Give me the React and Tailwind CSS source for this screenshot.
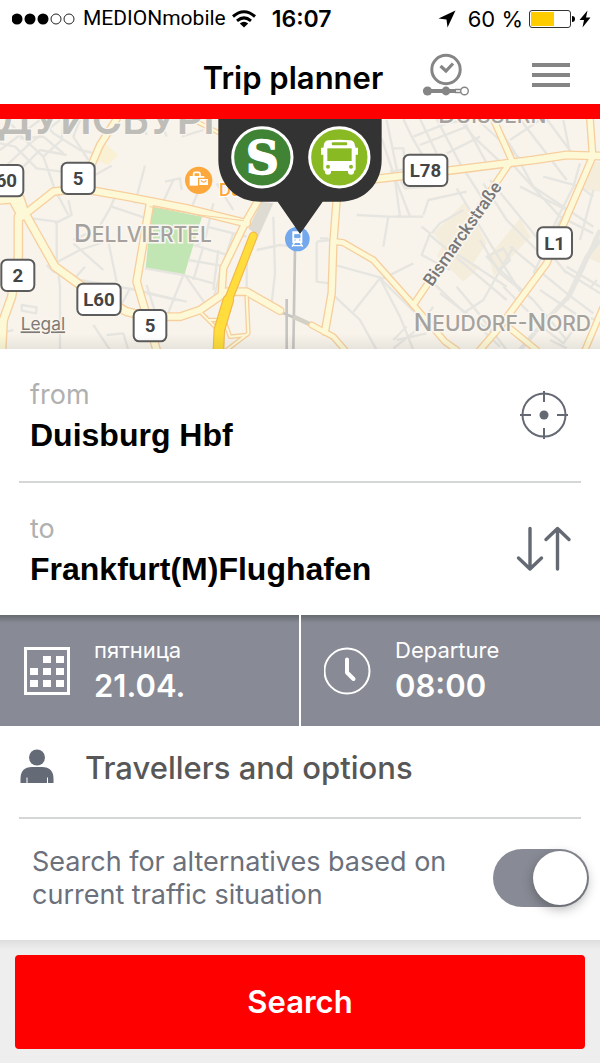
import React, { useState } from 'react';

const minorRoads = [
  'M0 150 L60 105 L120 60', 'M0 215 L90 130 L180 60', 'M20 57 L70 115 L130 170 L165 270 L205 345', 'M60 115 L130 110 L190 160',
  'M0 130 L45 140 L110 205 L185 215', 'M125 60 L160 100 L240 150 L285 160', 'M190 60 L185 120 L130 170', 'M70 200 L120 150 L200 165',
  'M240 60 L220 110 L265 180', 'M285 225 L335 197', 'M435 197 L405 310', 'M345 290 L330 325 L295 385 L220 420', 'M335 320 L440 355',
  'M205 300 L215 345 L165 370', 'M95 355 L170 365 L170 480 L180 560 L180 750', 'M145 500 L240 450 L330 420', 'M140 495 L160 515 L240 540 L410 570 L530 600',
  'M325 425 L350 545', 'M220 430 L310 510', 'M495 245 L540 235 L545 270', 'M520 240 L485 315', 'M605 250 L570 335', 'M640 310 L615 420 L585 440',
  'M440 555 L470 650', 'M435 505 L550 525 L640 550', 'M550 525 L500 650', 'M555 525 L615 610', 'M580 435 L700 470', 'M610 440 L580 540',
  'M655 450 L640 570', 'M700 400 L660 520 L640 600', 'M620 380 L740 410', 'M565 480 L680 500', 'M390 565 L350 640', 'M440 580 L560 605',
  'M740 480 L740 600', 'M820 350 L825 520 L815 610', 'M770 450 L840 435 L880 440', 'M65 615 L110 622 L108 640 L65 632 Z',
  'M280 675 L330 750', 'M320 705 L370 700 L385 750', 'M0 700 L40 690', 'M215 545 L255 500', 'M430 75 L440 105', 'M480 57 L500 110',
  'M545 110 L610 90', 'M650 250 L700 330', 'M1145 115 L1180 220 L1230 350', 'M1185 240 L1200 350 L1165 350 L1070 345', 'M1165 350 L1150 440', 'M960 415 L985 415 M950 425 L950 545 L990 550',
  'M950 425 L990 420', 'M1160 60 L1195 230 L1215 265 L1300 260', 'M1175 145 L1210 145 L1220 230', 'M1210 57 L1235 110 L1270 170', 'M1260 57 L1310 160', 'M1310 57 L1380 190 L1450 300',
  'M1380 60 L1420 110 L1500 185', 'M1430 57 L1570 185', 'M1480 60 L1540 150 L1600 260 L1780 380', 'M1560 57 L1700 240', 'M1640 57 L1720 165', 'M1690 60 L1710 160',
  'M1240 110 L1340 70 L1410 57', 'M1260 135 L1400 80', 'M1340 160 L1440 110', 'M1530 120 L1620 60', 'M1390 60 L1460 190', 'M1230 205 L1170 215',
  'M1270 345 L1285 300 L1400 275', 'M1295 400 L1320 370 L1390 330', 'M1265 380 L1290 400 L1265 465 L1350 510', 'M1370 265 L1470 430 L1560 575', 'M1290 405 L1390 490 L1520 600', 'M1320 500 L1360 455 L1520 560',
  'M1190 350 L1270 350', 'M1450 250 L1520 360 L1620 460', 'M1470 240 L1600 400 L1700 520', 'M1530 185 L1680 350 L1780 400', 'M1560 260 L1700 330 L1670 380 L1600 520', 'M1630 230 L1740 260 L1780 290', 'M1740 190 L1720 260 L1620 460',
  'M1460 470 L1510 445 L1530 480 L1500 510 Z', 'M1530 440 L1700 580 L1780 640', 'M1500 510 L1600 600 L1700 720', 'M1440 420 L1500 520 L1600 600', 'M1540 440 L1450 600 L1390 640', 'M1510 560 L1630 680',
  'M1780 270 L1740 420', 'M1620 570 L1740 650 L1800 660', 'M1690 510 L1800 580', 'M1770 565 L1790 540', 'M1700 500 L1800 560', 'M1005 495 L1150 535 L1240 490', 'M1005 590 L1080 660 L1130 750',
  'M1060 635 L1140 535 L1200 650 L1240 750', 'M1140 535 L1330 720', 'M1180 720 L1220 680', 'M1190 720 L1280 700', 'M1320 580 L1480 700', 'M1280 530 L1500 740', 'M1370 560 L1420 620 L1520 750', 'M1180 745 L1250 690 L1300 620', 'M1600 660 L1690 730 L1720 690', 'M1650 720 L1700 745',
];

const wideMinorRoads = ['M1800 390 L1750 500 L1710 585 L1620 680 L1560 750', 'M1800 420 L1760 470 L1700 600'];

const yellowRoads = [
  { d: 'M350 57 L300 135 L270 205', width: 18 },
  { d: 'M0 300 L60 295 L75 340 L165 500 L240 555 L380 635 L440 650', width: 22 },
  { d: 'M35 295 L65 350 L160 275 L240 265 L380 290 L560 325 L740 370', width: 20 },
  { d: 'M55 350 L55 470 L35 590 L10 660 L5 750', width: 22 },
  { d: 'M450 310 L410 545 L470 750', width: 20 },
  { d: 'M450 650 L540 650 L600 630 L680 575 L740 575 L840 632', width: 20 },
  { d: 'M775 300 L735 370 L670 505 L665 580', width: 18 },
  { d: 'M605 640 L650 685 M740 590 L745 700 L680 750 M625 660 L660 660 M665 640 L690 710 L740 705', width: 7 },
  { d: 'M590 65 L660 100', width: 8 },
  { d: 'M1100 240 L1320 215 L1600 180 L1700 165 L1800 168', width: 20 },
  { d: 'M1480 57 L1535 180 L1240 615', width: 16 },
  { d: 'M1770 57 L1778 170 L1640 490 L1500 680 L1440 750', width: 17 },
  { d: 'M1010 300 L1000 430 L995 580 L975 695', width: 19 },
  { d: 'M1005 425 L1030 428 L1120 480 L1240 615 L1335 725 L1370 750', width: 15 },
  { d: 'M935 675 L1000 710 L1035 750', width: 14 },
  { d: 'M1530 685 L1610 750 M1810 620 L1755 750', width: 15 },
];

const shields = [
  { label: '60', x: -32, y: 195, w: 102 },
  { label: '5', x: 185, y: 188, w: 99 },
  { label: '2', x: 4, y: 479, w: 99 },
  { label: 'L60', x: 232, y: 551, w: 130 },
  { label: '5', x: 401, y: 630, w: 98 },
  { label: 'L78', x: 1211, y: 164, w: 131 },
  { label: 'L1', x: 1612, y: 382, w: 104 },
];

function RoadShield({ label, x, y, w }) {
  return (
    <g>
      <rect x={x} y={y} width={w} height="94" rx="17" fill="#fff" stroke="#5c5c5c" strokeWidth="6" />
      <text x={x + w / 2} y={y + 67} textAnchor="middle" fontSize="56" fontWeight="700" fill="#444" fontFamily="Roboto, sans-serif">{label}</text>
    </g>
  );
}

// District names are set in small caps: a big initial, then smaller capitals
function DistrictLabel({ x, y, words }) {
  return (
    <text x={x} y={y} fontSize="74" fontWeight="500" fill="#a5a29e" stroke="#faf6ef" strokeWidth="9" paintOrder="stroke" fontFamily="Inter, sans-serif">
      {words.map(word => (
        <React.Fragment key={word}>
          {word[0]}<tspan fontSize="63">{word.slice(1)}</tspan>
        </React.Fragment>
      ))}
    </text>
  );
}

function StationMap() {
  return (
    <svg viewBox="0 57 1800 690" preserveAspectRatio="xMidYMid slice" className="block h-[230px] w-full bg-[#f8f4ec]" role="img" aria-label="Map around Duisburg Hbf">
      <defs>
        <linearGradient id="mapFade" x1="0" y1="0" x2="0" y2="1">
          <stop offset="0" stopColor="#000" stopOpacity="0" />
          <stop offset="1" stopColor="#000" stopOpacity="0.07" />
        </linearGradient>
      </defs>

      <path d="M315 130 L355 165 L325 195 L285 180 Z" fill="#faf0d3" />
      <path d="M455 320 L606 350 L553 525 L437 503 Z" fill="#c1e6b3" />
      <path d="M1395 305 L1460 430 L1400 520 L1300 400 Z M1560 355 L1592 410 L1482 528 L1465 470 Z M1325 440 L1440 500 L1390 545 L1310 468 Z M1770 185 L1800 185 L1800 275 L1745 270 Z M1780 410 L1800 410 L1800 490 L1765 475 Z" fill="#f5eddc" />
      <path d="M785 305 L820 310 L775 410 L745 385 Z" fill="#dedbd3" />

      <g fill="none" stroke="#e6e5e0" strokeWidth="7" strokeLinejoin="round">
        {minorRoads.map(d => <path key={d} d={d} />)}
        {wideMinorRoads.map(d => <path key={d} d={d} strokeWidth="13" />)}
      </g>
      <path d="M860 597 V750 M885 445 L880 750 M840 635 L900 660" fill="none" stroke="#c6c5c2" strokeWidth="8" />
      <path d="M880 650 L935 675" stroke="#d3d0c5" strokeWidth="14" />

      <g fill="none" strokeLinejoin="round" strokeLinecap="round">
        {yellowRoads.map(r => <path key={r.d} d={r.d} stroke="#f7cf9f" strokeWidth={r.width + 7} />)}
        {yellowRoads.map(r => <path key={r.d} d={r.d} stroke="#fdf9d7" strokeWidth={r.width - 1} />)}
        <path d="M450 320 L600 345 L730 362" stroke="#f7cf9f" strokeWidth="3" />
        <path d="M760 408 L685 600 L658 690 L655 760" stroke="#f3b84b" strokeWidth="27" />
        <path d="M685 600 L658 690 L655 760" stroke="#f3b84b" strokeWidth="35" />
        <path d="M760 408 L685 600" stroke="#ffdd3c" strokeWidth="20" />
        <path d="M685 600 L658 690 L655 760" stroke="#ffdd3c" strokeWidth="28" />
      </g>

      <text x="-8" y="101" fontSize="124" fontWeight="600" fill="#bfbdb8" stroke="#faf6ef" strokeWidth="8" paintOrder="stroke" fontFamily="Inter, sans-serif">ДУЙСБУРГ</text>
      <DistrictLabel x={222} y={427} words={['DELLVIERTEL']} />
      <DistrictLabel x={1241} y={693} words={['NEUDORF-', 'NORD']} />
      <DistrictLabel x={1314} y={70} words={['DUISSERN']} />
      <text transform="translate(1296 562) rotate(-55)" fontSize="52" fontWeight="500" fill="#787878" stroke="#faf6ef" strokeWidth="10" paintOrder="stroke" fontFamily="Roboto, sans-serif">Bismarckstraße</text>
      <text x="62" y="691" fontSize="52" fill="#7e7b76" stroke="#faf6ef" strokeWidth="6" paintOrder="stroke" textDecoration="underline" fontFamily="Inter, sans-serif">Legal</text>

      {shields.map(s => <RoadShield key={`${s.label}-${s.x}`} {...s} />)}

      {/* shopping marker */}
      <circle cx="596" cy="241" r="41" fill="#fda83c" />
      <path d="M581 228 v-7 q0 -4 4 -4 h10 q5 0 5 4 v7" fill="none" stroke="#fff" strokeWidth="5" />
      <path d="M569 228 h44 v29 h-44 Z" fill="#fff" />
      <path d="M596 235 h30 v22 h-30 Z" fill="#fff" stroke="#fda83c" strokeWidth="4" />
      <path d="M603 241 q8 11 16 0" fill="none" stroke="#fda83c" strokeWidth="4" />
      <text x="657" y="289" fontSize="50" fontWeight="600" fill="#fda83c" stroke="#fff" strokeWidth="7" paintOrder="stroke" fontFamily="Inter, sans-serif">Du</text>

      {/* railway station marker */}
      <circle cx="892" cy="417" r="37" fill="#74a8ed" />
      <path d="M879 396 h26 v31 h-26 Z M884 427 l-8 13 M900 427 l8 13 M880 437 h24" fill="#fff" stroke="#fff" strokeWidth="4" />
      <path d="M884 404 h16 v9 h-16 Z M883 420 h4 M897 420 h4" fill="#74a8ed" stroke="#74a8ed" strokeWidth="3" />

      <path d="M655 57 V180 C655 250 705 305 780 305 H833 L900 402 L968 305 H1020 C1095 305 1145 250 1145 180 V57 Z" fill="#333" />
      <circle cx="787" cy="172" r="89" fill="#408335" stroke="#fff" strokeWidth="9" />
      <text x="787" y="223" textAnchor="middle" fontSize="138" fontWeight="700" fill="#fff" stroke="#fff" strokeWidth="4" fontFamily="DejaVu Serif, serif">S</text>
      <circle cx="1018" cy="172" r="89" fill="#8aba23" stroke="#fff" strokeWidth="9" />
      <path d="M972 133 Q974 122 986 121 Q1018 117 1050 121 Q1062 122 1064 133 L1067 143 H1074 V164 H1067 V206 Q1067 212 1062 213 V219 Q1060 224 1053 224 Q1046 224 1044 219 V213 H993 V219 Q991 224 984 224 Q977 224 975 219 V213 Q970 212 970 206 V164 H963 V143 H970 Z" fill="#fff" />
      <path d="M982 145 H1055 V183 H982 Z" fill="#8aba23" />
      <rect x="995" y="127" width="47" height="9" rx="4" fill="#8aba23" />
      <circle cx="984" cy="200" r="6" fill="#8aba23" />
      <circle cx="1053" cy="200" r="6" fill="#8aba23" />
      <rect x="0" y="700" width="1800" height="50" fill="url(#mapFade)" />
    </svg>
  );
}

function StatusBar() {
  return (
    <div className="flex h-[38px] items-center pr-[9px] pl-3 text-[22px]">
      <svg width="64" height="14" viewBox="0 0 64 14">
        {[5, 18, 31].map(x => <circle key={x} cx={x} cy="7" r="5.5" />)}
        {[44, 57].map(x => <circle key={x} cx={x} cy="7" r="5" fill="none" stroke="#222" />)}
      </svg>
      <span className="ml-[7px] font-[Roboto,sans-serif] text-[21px]">MEDIONmobile</span>
      <svg width="24" height="18" viewBox="0 0 24 18" className="ml-1.5" fill="none" stroke="#000" strokeWidth="3">
        <path d="M1 6.5 Q12 -3 23 6.5" />
        <path d="M5 10.8 Q12 5 19 10.8" />
        <path d="M12 17.5 L7.8 13.5 Q12 10 16.2 13.5 Z" fill="#000" stroke="none" />
      </svg>
      <span className="ml-4 text-[23px] font-semibold">16:07</span>
      <svg width="18" height="18" viewBox="0 0 18 18" className="ml-auto">
        <path d="M17.5 0.5 L9.5 17.5 L8.5 9.5 L0.5 8.5 Z" />
      </svg>
      <span className="ml-3">60 %</span>
      <svg width="46" height="18" viewBox="0 0 46 18" className="ml-1.5">
        <rect x="0.5" y="0.5" width="41" height="17" rx="2.5" fill="#fff" stroke="#333" />
        <rect x="2" y="2" width="23" height="14" fill="#fc0" />
        <path d="M43 6 Q46 6 46 9 Q46 12 43 12 Z" />
      </svg>
      <svg width="12" height="18" viewBox="0 0 12 18" className="ml-1">
        <path d="M8.5 0.5 L0.5 10 H5 L3.5 17.5 L11.5 7.5 H7 Z" />
      </svg>
    </div>
  );
}

function Header() {
  return (
    <header className="grid h-[66px] grid-cols-[1fr_auto_1fr] items-center pr-[30px] pl-4">
      <h1 className="col-start-2 pt-3.5 text-[31px] leading-9 font-semibold">Trip planner</h1>
      <div className="flex items-center justify-between pt-2 pl-[39px]">
        <button aria-label="Connections">
          <svg width="48" height="44" viewBox="0 0 48 44" fill="none" stroke="#858585" className="block">
            <circle cx="24" cy="16.5" r="14.2" strokeWidth="3" />
            <path d="M18.5 13 L24 18 L31 10.5" strokeWidth="3.2" />
            <path d="M5 38 H34" strokeWidth="4" />
            <path d="M33 36.5 H39 M33 39.5 H39" strokeWidth="1.3" />
            <circle cx="5.5" cy="38" r="4.6" fill="#858585" stroke="none" />
            <circle cx="24" cy="38" r="4.4" fill="#858585" stroke="none" />
            <circle cx="42.5" cy="38" r="3.8" fill="#fff" strokeWidth="1.4" />
          </svg>
        </button>
        <button aria-label="Menu" className="flex w-[38px] flex-col gap-1.5">
          <span className="h-[4px] bg-[#858585]" />
          <span className="h-[4px] bg-[#858585]" />
          <span className="h-[4px] bg-[#858585]" />
        </button>
      </div>
    </header>
  );
}

function StationField({ id, label, value, onChange, children }) {
  return (
    <div className="flex h-[132px] items-center pr-7 pl-[30px]">
      <div className="min-w-0 flex-1">
        <label htmlFor={id} className="block text-[27px] leading-10 text-[#b0b0b0]">{label}</label>
        <input id={id} value={value} onChange={e => onChange(e.target.value)} className="block h-10 w-full font-['Liberation_Sans',Arial,sans-serif] text-[32px] font-bold outline-none" />
      </div>
      {children}
    </div>
  );
}

function TimeButton({ label, value, children }) {
  return (
    <button className="flex items-center gap-[23px] bg-[#888b95] bg-linear-to-b from-[#676a70] to-[#888b95] to-[8px] pl-[23px] text-left">
      {children}
      <span className="pb-0.5">
        <span className="block text-[22px] leading-8">{label}</span>
        <span className="block text-[31px] leading-10 font-semibold">{value}</span>
      </span>
    </button>
  );
}

export default function App() {
  const [from, setFrom] = useState('Duisburg Hbf');
  const [to, setTo] = useState('Frankfurt(M)Flughafen');
  const [traffic, setTraffic] = useState(true);

  const swap = () => {
    setFrom(to);
    setTo(from);
  };

  return (
    <div className="min-h-screen bg-[#eee] font-['Inter','Noto_Sans',sans-serif] text-black">
      <div className="bg-white">
        <StatusBar />
        <Header />
      </div>
      <div className="h-[15px] bg-[#f00]" />
      <StationMap />

      <main className="bg-white">
        <StationField id="from" label="from" value={from} onChange={setFrom}>
          <button aria-label="Use current location" className="mr-1">
            <svg width="50" height="50" viewBox="0 0 50 50" fill="none" stroke="#646973" strokeWidth="2" className="block">
              <circle cx="26" cy="25" r="21.5" />
              <path d="M26 1 V12 M26 38 V49 M2 25 H13 M39 25 H50" />
              <circle cx="26" cy="25" r="4.5" fill="#646973" stroke="none" />
            </svg>
          </button>
        </StationField>
        <hr className="mx-[19px] border-t-2 border-[#d5d7d6]" />
        <StationField id="to" label="to" value={to} onChange={setTo}>
          <button aria-label="Swap stations" onClick={swap}>
            <svg width="56" height="46" viewBox="0 0 56 46" fill="none" stroke="#646973" strokeWidth="3.4" strokeLinecap="round" strokeLinejoin="round" className="block">
              <path d="M14 2.5 V43 M2.5 32 L14 43 L25.5 32" />
              <path d="M41.5 43 V2.5 M30 13.5 L41.5 2.5 L53 13.5" />
            </svg>
          </button>
        </StationField>

        <div className="grid h-[111px] grid-cols-2 gap-0.5 text-white">
          <TimeButton label="пятница" value="21.04.">
            <svg width="48" height="48" viewBox="0 0 48 48" fill="#fff" className="block">
              <rect x="2.5" y="1.5" width="43" height="45" fill="none" stroke="#fff" strokeWidth="3" />
              <path d="M20 9 h8 v7 h-8 Z M33 9 h8 v7 h-8 Z M7 21 h8 v7 h-8 Z M20 21 h8 v7 h-8 Z M33 21 h8 v7 h-8 Z M7 33 h8 v7 h-8 Z M20 33 h8 v7 h-8 Z M33 33 h8 v7 h-8 Z" />
            </svg>
          </TimeButton>
          <TimeButton label="Departure" value="08:00">
            <svg width="48" height="48" viewBox="0 0 48 48" fill="none" stroke="#fff" className="block">
              <circle cx="23" cy="24" r="22.5" strokeWidth="2" />
              <path d="M23 12.5 V25.5 L29.5 32" strokeWidth="4" strokeLinecap="round" strokeLinejoin="round" />
            </svg>
          </TimeButton>
        </div>

        <button className="flex h-[91px] w-full items-center gap-[31px] pb-1.5 pl-5 text-left text-[31px] font-medium text-[#575757]">
          <svg width="34" height="34" viewBox="0 0 34 34" fill="#646b76" className="mb-1.5 block">
            <circle cx="17" cy="8.5" r="8" />
            <path d="M0.5 34 V30 Q0.5 18 12 18 H22 Q33.5 18 33.5 30 V34 H28 V28.5 H27 V34 H7.5 V28.5 H6.5 V34 Z" />
          </svg>
          Travellers and options
        </button>
        <hr className="mx-[19px] border-t-2 border-[#d5d7d6]" />

        <div className="flex h-[121px] items-center justify-between pr-[11px] pb-1 pl-8">
          <label htmlFor="traffic" className="w-[430px] text-[27px] leading-[33px] text-[#6b707b]">
            Search for alternatives based on current traffic situation
          </label>
          <input
            id="traffic"
            type="checkbox"
            role="switch"
            checked={traffic}
            onChange={e => setTraffic(e.target.checked)}
            className="flex h-[58px] w-24 shrink-0 appearance-none items-center rounded-full bg-[#888b95] px-0.5 before:h-[54px] before:w-[54px] before:rounded-full before:bg-white before:shadow-[0_4px_12px_rgba(0,0,0,0.3)] checked:before:ml-auto"
          />
        </div>
      </main>

      <footer className="bg-linear-to-b from-[#dedede] to-[#eee] to-[10px] p-[15px] pb-3.5">
        <button className="block h-[94px] w-full rounded bg-[#f00] text-[31px] font-semibold text-white">Search</button>
      </footer>
    </div>
  );
}
